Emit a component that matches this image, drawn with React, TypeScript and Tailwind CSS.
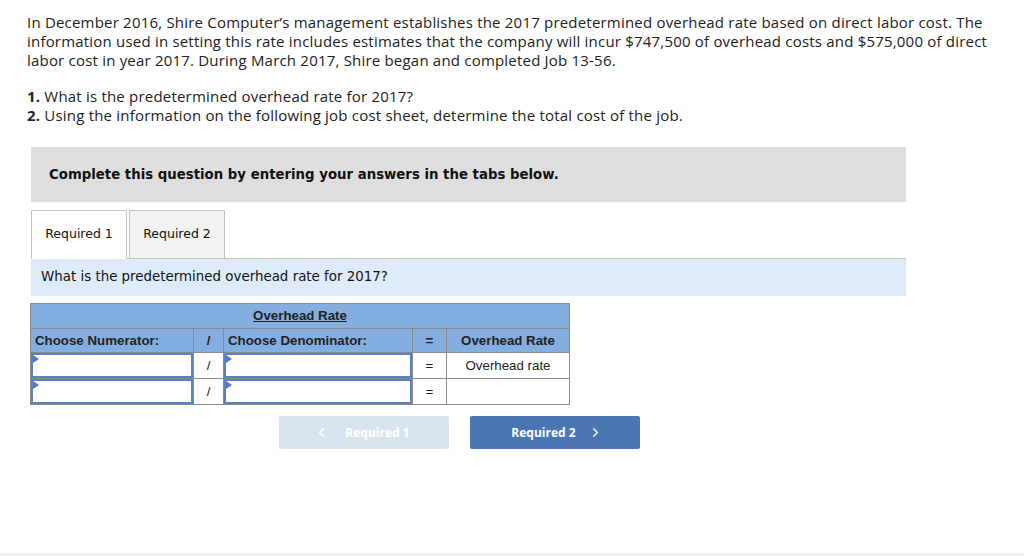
import React from "react";
import { ChevronLeft, ChevronRight } from "lucide-react";

const Tri = () => (
  <span className="absolute left-0 top-0 w-0 h-0 border-t-[4px] border-b-[4px] border-l-[6px] border-t-transparent border-b-transparent border-l-[#4a7cc2]" />
);

const InputCell = () => (
  <td className="border border-[#8a8a8a] p-0 h-[26px]">
    <div className="relative h-[25px] border-2 border-[#5a83bd] bg-white">
      <Tri />
    </div>
  </td>
);

export default function App() {
  const body = "font-['Open_Sans',sans-serif]";
  return (
    <div className="w-[1024px] h-[556px] bg-white relative overflow-hidden">
      <div className={`${body} text-[15px] leading-[19px] tracking-[0.2px] text-[#222] pl-[27px] pr-[30px] pt-[13px]`}>
        <p>
          In December 2016, Shire Computer’s management establishes the 2017 predetermined overhead rate based on direct labor cost. The information used in setting this rate includes estimates that the company will incur $747,500 of overhead costs and $575,000 of direct labor cost in year 2017. During March 2017, Shire began and completed Job 13-56.
        </p>
        <p className="mt-[17px]">
          <b>1.</b> What is the predetermined overhead rate for 2017?
        </p>
        <p>
          <b>2.</b> Using the information on the following job cost sheet, determine the total cost of the job.
        </p>
      </div>

      <div className="ml-[31px] w-[875px] mt-[22px] h-[55px] bg-[#dedede] flex items-center pl-[18px] font-['DejaVu_Sans','Verdana',sans-serif] font-bold text-[13.3px] text-[#111]">
        Complete this question by entering your answers in the tabs below.
      </div>

      <div className="ml-[31px] w-[875px] mt-[8px] font-['DejaVu_Sans','Verdana',sans-serif] text-[12.5px] text-[#111]">
        <div className="flex items-end h-[49px] border-b border-[#c4c4c4]">
          <div className="w-[96px] h-[49px] -mb-px bg-white border border-[#c4c4c4] border-b-white flex items-center justify-center">
            Required 1
          </div>
          <div className="w-[96px] h-[48px] ml-[2px] bg-[#f2f2f2] border border-b-0 border-[#c4c4c4] flex items-center justify-center">
            Required 2
          </div>
        </div>
        <div className="h-[37px] bg-[#deebf8] flex items-center pl-[10px] text-[13.4px]">
          What is the predetermined overhead rate for 2017?
        </div>
      </div>

      <div className="ml-[30px] mt-[7px] font-['Liberation_Sans','Arial',sans-serif] text-[13.3px] text-[#222]">
        <table className="border-collapse w-[539px] table-fixed">
          <colgroup>
            <col className="w-[163px]" />
            <col className="w-[30px]" />
            <col className="w-[189px]" />
            <col className="w-[34px]" />
            <col className="w-[123px]" />
          </colgroup>
          <tbody>
            <tr className="bg-[#84aee0] h-[25px]">
              <th colSpan={5} className="border border-[#8a8a8a] font-bold text-center">
                <span className="underline">Overhead Rate</span>
              </th>
            </tr>
            <tr className="bg-[#84aee0] h-[24px]">
              <th className="border border-[#8a8a8a] text-left pl-[4px] font-bold">Choose Numerator:</th>
              <th className="border border-[#8a8a8a] text-center font-bold">/</th>
              <th className="border border-[#8a8a8a] text-left pl-[4px] font-bold">Choose Denominator:</th>
              <th className="border border-[#8a8a8a] text-center font-bold">=</th>
              <th className="border border-[#8a8a8a] text-center font-bold">Overhead Rate</th>
            </tr>
            <tr>
              <InputCell />
              <td className="border border-[#8a8a8a] text-center">/</td>
              <InputCell />
              <td className="border border-[#8a8a8a] text-center">=</td>
              <td className="border border-[#8a8a8a] text-center">Overhead rate</td>
            </tr>
            <tr>
              <InputCell />
              <td className="border border-[#8a8a8a] text-center">/</td>
              <InputCell />
              <td className="border border-[#8a8a8a] text-center">=</td>
              <td className="border border-[#8a8a8a] text-center"></td>
            </tr>
          </tbody>
        </table>
      </div>

      <div className={`flex ml-[279px] mt-[11px] gap-[21px] ${body} font-bold text-[12px] text-white`}>
        <div className="w-[170px] h-[33px] rounded-[2px] bg-[#d9e3ef] flex items-center justify-center gap-[16px]">
          <ChevronLeft size={15} strokeWidth={2} className="-ml-[4px]" />
          <span>Required 1</span>
        </div>
        <div className="w-[170px] h-[33px] rounded-[2px] bg-[#4a77b4] flex items-center justify-center gap-[12px]">
          <span className="ml-[4px]">Required 2</span>
          <ChevronRight size={15} strokeWidth={2} />
        </div>
      </div>

      <div className="absolute left-0 right-0 bottom-0 h-[3px] bg-[#f0f0f0]" />
    </div>
  );
}
